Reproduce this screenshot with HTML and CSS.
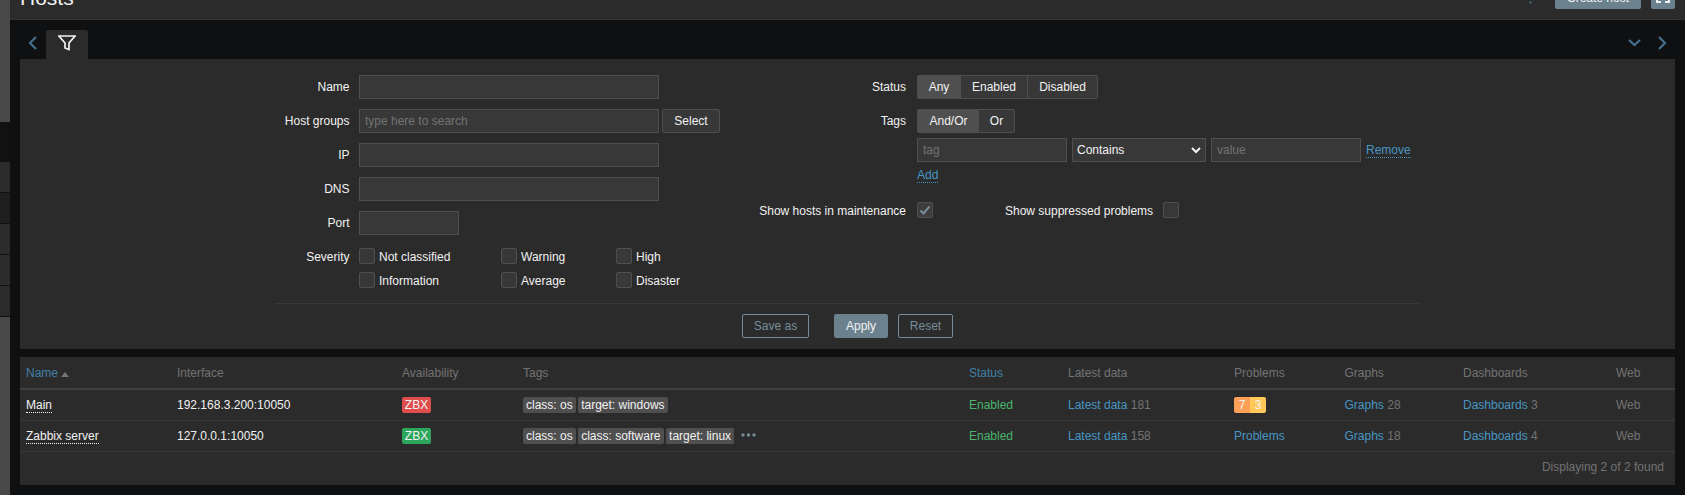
FILE: index.html
```html
<!DOCTYPE html>
<html lang="en">
<head>
    <meta charset="UTF-8">
    <title>Hosts</title>
    <link rel="stylesheet" href="styles.css">
</head>
<body>
    <div class="sidebar">
        <div class="side-light side-top"></div>
        <div class="side-black"></div>
        <div class="side-item"></div>
        <div class="side-item side-dark"></div>
        <div class="side-item"></div>
        <div class="side-item"></div>
        <div class="side-item"></div>
        <div class="side-light side-fill"></div>
    </div>

    <div class="main">
        <header class="page-header">
            <h1>Hosts</h1>
            <div class="header-controls">
                <svg class="kebab" width="3" height="11" viewBox="0 0 3 11"><circle cx="1.5" cy="1.500" r="1"/><circle cx="1.5" cy="5.500" r="1"/><circle cx="1.5" cy="9.500" r="1"/></svg>
                <button class="btn-create">Create host</button>
                <button class="btn-kiosk">
                    <svg width="24" height="24" viewBox="0 0 24 24"><path d="M5 6h5v2H7v3H5zM14 6h5v5h-2V8h-3zM5 13h2v3h3v2H5zM17 13h2v5h-5v-2h3z"/></svg>
                </button>
            </div>
        </header>

        <div class="tab-nav">
            <div class="tab-left">
                <svg class="chevron" width="9" height="14" viewBox="0 0 9 14"><path d="M8 1 2 7l6 6"/></svg>
                <div class="tab">
                    <svg width="18" height="16" viewBox="0 0 18 16"><path class="funnel" d="M1 1h16l-6 7v6.500l-4-1.500V8z"/></svg>
                </div>
            </div>
            <div class="tab-right">
                <svg class="chevron" width="13" height="8" viewBox="0 0 13 8"><path d="m1 1 5.500 5L12 1"/></svg>
                <svg class="chevron" width="9" height="14" viewBox="0 0 9 14"><path d="m1 1 6 6-6 6"/></svg>
            </div>
        </div>

        <form class="filter">
            <div class="filter-columns">
                <div class="filter-col filter-left">
                    <label>Name</label>
                    <div class="field"><input class="input-wide" type="text"></div>

                    <label>Host groups</label>
                    <div class="field">
                        <input class="input-wide" type="text" placeholder="type here to search">
                        <button type="button" class="btn-select">Select</button>
                    </div>

                    <label>IP</label>
                    <div class="field"><input class="input-wide" type="text"></div>

                    <label>DNS</label>
                    <div class="field"><input class="input-wide" type="text"></div>

                    <label>Port</label>
                    <div class="field"><input class="input-port" type="text"></div>

                    <label>Severity</label>
                    <div class="severity">
                        <div class="check-item"><span class="check"></span>Not classified</div>
                        <div class="check-item"><span class="check"></span>Warning</div>
                        <div class="check-item"><span class="check"></span>High</div>
                        <div class="check-item"><span class="check"></span>Information</div>
                        <div class="check-item"><span class="check"></span>Average</div>
                        <div class="check-item"><span class="check"></span>Disaster</div>
                    </div>
                </div>

                <div class="filter-col filter-right">
                    <label>Status</label>
                    <div class="segmented">
                        <span class="seg seg-any active">Any</span>
                        <span class="seg seg-enabled">Enabled</span>
                        <span class="seg seg-disabled">Disabled</span>
                    </div>

                    <label>Tags</label>
                    <div class="tags-control">
                        <div class="segmented">
                            <span class="seg seg-andor active">And/Or</span>
                            <span class="seg seg-or">Or</span>
                        </div>
                        <div class="tag-row">
                            <input class="input-tag" type="text" placeholder="tag">
                            <div class="select-wrap">
                                <select><option>Contains</option></select>
                                <svg width="10" height="7" viewBox="0 0 10 7"><path d="m1 1 4 4 4-4"/></svg>
                            </div>
                            <input class="input-tag" type="text" placeholder="value">
                            <a class="link-dotted" href="#">Remove</a>
                        </div>
                        <div class="add-row"><a class="link-dotted" href="#">Add</a></div>
                    </div>

                    <label class="label-maintenance">Show hosts in maintenance</label>
                    <div class="maintenance">
                        <span class="check checked">
                            <svg width="14" height="14" viewBox="0 0 14 14"><path d="m2.500 7.500 3 3 6-7"/></svg>
                        </span>
                        <span class="suppressed">Show suppressed problems</span>
                        <span class="check"></span>
                    </div>
                </div>
            </div>

            <div class="filter-divider"></div>

            <div class="filter-buttons">
                <button type="button" class="btn-alt btn-save">Save as</button>
                <button type="button" class="btn-apply">Apply</button>
                <button type="button" class="btn-alt btn-reset">Reset</button>
            </div>
        </form>

        <div class="hosts">
            <table>
                <colgroup>
                    <col class="col-name">
                    <col class="col-interface">
                    <col class="col-availability">
                    <col class="col-tags">
                    <col class="col-status">
                    <col class="col-latest">
                    <col class="col-problems">
                    <col class="col-graphs">
                    <col class="col-dashboards">
                    <col class="col-web">
                </colgroup>
                <thead>
                    <tr>
                        <th><a href="#">Name</a><span class="sort-arrow"></span></th>
                        <th>Interface</th>
                        <th>Availability</th>
                        <th>Tags</th>
                        <th><a href="#">Status</a></th>
                        <th>Latest data</th>
                        <th>Problems</th>
                        <th>Graphs</th>
                        <th>Dashboards</th>
                        <th>Web</th>
                    </tr>
                </thead>
                <tbody>
                    <tr>
                        <td><a class="host-link" href="#">Main</a></td>
                        <td>192.168.3.200:10050</td>
                        <td><span class="zbx zbx-red">ZBX</span></td>
                        <td>
                            <div class="tag-list">
                                <span class="tag">class: os</span>
                                <span class="tag">target: windows</span>
                            </div>
                        </td>
                        <td class="enabled">Enabled</td>
                        <td><a href="#">Latest data</a> <span class="count">181</span></td>
                        <td>
                            <div class="problems">
                                <span class="sev-average">7</span><span class="sev-warning">3</span>
                            </div>
                        </td>
                        <td><a href="#">Graphs</a> <span class="count">28</span></td>
                        <td><a href="#">Dashboards</a> <span class="count">3</span></td>
                        <td class="muted">Web</td>
                    </tr>
                    <tr>
                        <td><a class="host-link" href="#">Zabbix server</a></td>
                        <td>127.0.0.1:10050</td>
                        <td><span class="zbx zbx-green">ZBX</span></td>
                        <td>
                            <div class="tag-list">
                                <span class="tag">class: os</span>
                                <span class="tag">class: software</span>
                                <span class="tag">target: linux</span>
                                <svg class="more" width="15" height="4" viewBox="0 0 15 4"><circle cx="2" cy="2" r="1.700"/><circle cx="7.500" cy="2" r="1.700"/><circle cx="13" cy="2" r="1.700"/></svg>
                            </div>
                        </td>
                        <td class="enabled">Enabled</td>
                        <td><a href="#">Latest data</a> <span class="count">158</span></td>
                        <td><a href="#">Problems</a></td>
                        <td><a href="#">Graphs</a> <span class="count">18</span></td>
                        <td><a href="#">Dashboards</a> <span class="count">4</span></td>
                        <td class="muted">Web</td>
                    </tr>
                </tbody>
            </table>
            <div class="table-stats">Displaying 2 of 2 found</div>
        </div>
    </div>
</body>
</html>
```

FILE: styles.css
```css
* {
    box-sizing: border-box;
}
html, body {
    height: 495px;
    overflow: hidden;
}
body {
    margin: 0;
    display: flex;
    background-color: #0e1012;
    color: #f2f2f2;
    font-family: "Liberation Sans", Arial, sans-serif;
    font-size: 12px;
    line-height: 16px;
}
a {
    color: #4796c4;
    text-decoration: none;
}
button, input, select {
    font-family: inherit;
    font-size: 12px;
    margin: 0;
}

/* left menu, only its edge is on screen */
.sidebar {
    width: 10px;
    height: 495px;
    flex: none;
    display: flex;
    flex-direction: column;
}
.side-light {
    background-color: #484848;
}
.side-top {
    height: 122px;
}
.side-black {
    height: 40px;
    background-color: #111111;
}
.side-item {
    height: 31px;
    background-color: #2b2b2b;
    border-bottom: 1px solid #111111;
}
.side-dark {
    background-color: #1f1f1f;
}
.side-fill {
    flex: 1;
}

.main {
    flex: 1;
    min-width: 0;
}

/* header */
.page-header {
    height: 20px;
    padding: 0 10px 10px;
    background-color: #2b2b2b;
    border-bottom: 1px solid #333333;
    display: flex;
    justify-content: space-between;
    align-items: flex-end;
    overflow: hidden;
}
h1 {
    margin: 0 0 1px;
    font-size: 21px;
    font-weight: normal;
    line-height: 21px;
    flex: none;
}
.header-controls {
    display: flex;
    align-items: flex-end;
    flex: none;
}
.kebab {
    fill: #4f7f9f;
    margin-right: 23px;
    margin-bottom: 5px;
}
.btn-create, .btn-kiosk {
    height: 24px;
    border: none;
    border-radius: 2px;
    background-color: #6b818e;
    color: #f2f2f2;
    padding: 0;
}
.btn-create {
    width: 86px;
    padding-top: 2px;
}
.btn-kiosk {
    width: 24px;
    margin-left: 10px;
}
.btn-kiosk svg {
    display: block;
    fill: #f2f2f2;
}

/* filter tab */
.tab-nav {
    height: 39px;
    margin: 0 10px;
    display: flex;
    justify-content: space-between;
}
.tab-left {
    display: flex;
    align-items: flex-end;
    padding-left: 8px;
}
.tab-left .chevron {
    align-self: flex-start;
    margin-top: 16px;
    margin-right: 9px;
}
.tab-right {
    display: flex;
    align-items: center;
    gap: 17px;
    padding-top: 7px;
    padding-right: 8px;
    height: 39px;
}
.chevron {
    fill: none;
    stroke: #45708e;
    stroke-width: 2.200;
}
.tab {
    width: 42px;
    height: 29px;
    background-color: #2b2b2b;
    border-radius: 2px 2px 0 0;
    padding: 5px 0 0 12px;
}
.tab svg {
    display: block;
}
.funnel {
    fill: none;
    stroke: #f2f2f2;
    stroke-width: 1.700;
}

/* filter form */
.filter {
    height: 290px;
    margin: 0 10px 8px;
    padding-top: 16px;
    background-color: #2b2b2b;
}
.filter-columns {
    display: flex;
    height: 213px;
}
.filter-col {
    display: grid;
    align-content: start;
    row-gap: 10px;
}
.filter-col label {
    text-align: right;
    line-height: 24px;
}
.filter-left {
    width: 730px;
    grid-template-columns: 329.5px 1fr;
    column-gap: 9.5px;
}
.filter-right {
    grid-template-columns: 156px 1fr;
    column-gap: 11px;
}
.field {
    display: flex;
    gap: 3px;
}
input, select {
    height: 24px;
    background-color: #383838;
    border: 1px solid #4f4f4f;
    color: #f2f2f2;
    padding: 0 5px;
    border-radius: 0;
}
input::placeholder {
    color: #737373;
    opacity: 1;
}
.input-wide {
    width: 300px;
}
.input-port {
    width: 100px;
}
.btn-select {
    width: 58px;
    height: 24px;
    background-color: #383838;
    border: 1px solid #4f4f4f;
    border-radius: 2px;
    color: #f2f2f2;
    padding: 0;
}
.severity {
    display: grid;
    grid-template-columns: 142px 115px 1fr;
    row-gap: 6px;
    padding-top: 3px;
}
.check-item {
    display: flex;
    align-items: flex-start;
    gap: 4px;
    line-height: 18px;
}
.check {
    width: 16px;
    height: 16px;
    flex: none;
    background-color: #383838;
    border: 1px solid #4f4f4f;
    border-radius: 2px;
    display: block;
}
.checked {
    background-color: #3d3d3d;
}
.checked svg {
    display: block;
    margin: 0;
    fill: none;
    stroke: #768d99;
    stroke-width: 2;
}

/* right column */
.segmented {
    display: inline-flex;
    height: 24px;
    border: 1px solid #4f4f4f;
    border-radius: 2px;
    background-color: #383838;
    width: max-content;
}
.seg {
    line-height: 22px;
    text-align: center;
}
.seg + .seg {
    border-left: 1px solid #4f4f4f;
}
.active {
    background-color: #4f4f4f;
}
.seg-any {
    width: 42px;
}
.seg-enabled {
    width: 67px;
}
.seg-disabled {
    width: 70px;
}
.seg-andor {
    width: 61px;
}
.seg-or {
    width: 35px;
    border-left: none !important;
}
.tags-control {
    display: flex;
    flex-direction: column;
    gap: 5px;
    padding-bottom: 9px;
}
.tag-row {
    display: flex;
    align-items: center;
    gap: 5px;
}
.input-tag {
    width: 150px;
}
.select-wrap {
    position: relative;
    width: 134px;
}
select {
    width: 134px;
    appearance: none;
    padding-left: 4px;
}
.select-wrap svg {
    position: absolute;
    right: 5px;
    top: 9px;
    fill: none;
    stroke: #f2f2f2;
    stroke-width: 2;
}
.link-dotted {
    border-bottom: 1px dotted #4796c4;
    line-height: 14px;
}
.add-row {
    display: flex;
    height: 16px;
    padding-top: 1px;
    align-items: flex-start;
}
.filter-col .label-maintenance {
    line-height: 18px;
}
.maintenance {
    display: flex;
    align-items: flex-start;
    height: 18px;
    line-height: 18px;
}
.suppressed {
    margin-left: 72px;
    margin-right: 10px;
}
.filter-divider {
    height: 1px;
    margin: 15px 255px 10px;
    background-color: #383838;
}
.filter-buttons {
    display: flex;
    justify-content: center;
}
.filter-buttons button {
    height: 24px;
    border-radius: 2px;
    padding: 0;
}
.btn-alt {
    background: none;
    border: 1px solid #768d99;
    color: #768d99;
}
.btn-save {
    width: 67px;
    margin-right: 25px;
}
.btn-apply {
    width: 54px;
    margin-right: 10px;
    background-color: #6b818e;
    border: none;
    color: #f2f2f2;
}
.btn-reset {
    width: 55px;
}

/* hosts table */
.hosts {
    margin: 0 10px;
    height: 128px;
    background-color: #2b2b2b;
}
table {
    width: 100%;
    table-layout: fixed;
    border-collapse: separate;
    border-spacing: 0;
}
.col-name { width: 151px; }
.col-interface { width: 225px; }
.col-availability { width: 121px; }
.col-tags { width: 446px; }
.col-status { width: 99px; }
.col-latest { width: 166px; }
.col-problems { width: 110.5px; }
.col-graphs { width: 118.5px; }
.col-dashboards { width: 153px; }
.col-web { width: 65px; }
th, td {
    padding: 0 6px;
    text-align: left;
    font-weight: normal;
    white-space: nowrap;
}
th {
    height: 33px;
    color: #737373;
    border-bottom: 2px solid #3f3f3f;
}
th a {
    color: #4080a8;
}
td {
    height: 31px;
    border-bottom: 1px solid #383838;
}
.sort-arrow {
    display: inline-block;
    margin-left: 3px;
    border-left: 4px solid transparent;
    border-right: 4px solid transparent;
    border-bottom: 5px solid #737373;
}
.host-link {
    color: #f2f2f2;
    border-bottom: 1px dotted #f2f2f2;
    display: inline-block;
    line-height: 14px;
}
.zbx {
    display: inline-block;
    width: 29px;
    height: 16px;
    line-height: 16px;
    text-align: center;
    border-radius: 2px;
    vertical-align: middle;
}
.zbx-red {
    background-color: #df4d4d;
}
.zbx-green {
    background-color: #2ba65c;
}
.tag-list {
    display: flex;
    align-items: center;
    gap: 2.5px;
}
.tag {
    height: 16px;
    padding: 0 3px;
    background-color: #4f4f4f;
    border-radius: 2px;
    line-height: 16px;
}
.more {
    fill: #768d99;
    margin-left: 4px;
    margin-top: -2px;
}
.enabled {
    color: #4cb56c;
}
.count, .muted {
    color: #737373;
}
.problems {
    display: flex;
}
.problems span {
    width: 16px;
    height: 16px;
    line-height: 16px;
    text-align: center;
}
.sev-average {
    background-color: #ffa059;
    border-radius: 2px 0 0 2px;
}
.sev-warning {
    background-color: #ffc859;
    border-radius: 0 2px 2px 0;
}
.table-stats {
    height: 33px;
    padding-right: 11px;
    line-height: 30px;
    text-align: right;
    color: #737373;
}
```
